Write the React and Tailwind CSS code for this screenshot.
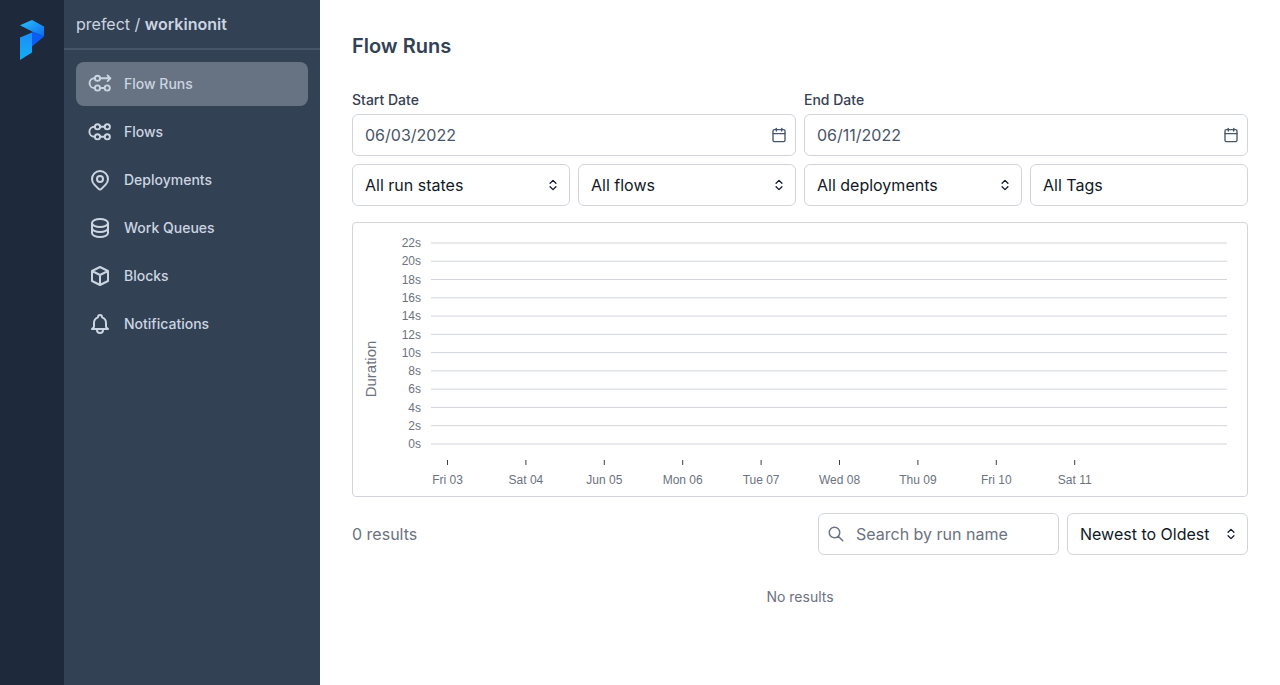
import { Calendar, ChevronsUpDown } from 'lucide-react'
import { HiOutlineBell, HiOutlineCube, HiOutlineDatabase, HiOutlineLocationMarker, HiOutlineSearch } from 'react-icons/hi'

const font = 'font-["Inter","Liberation_Sans",sans-serif]'

function FlowRunsIcon() {
  return (
    <svg className="w-6 h-6 shrink-0" viewBox="0 0 24 24" fill="none" stroke="currentColor" strokeWidth={1.9} strokeLinecap="round" strokeLinejoin="round">
      <circle cx="9.5" cy="6.3" r="2.6" />
      <circle cx="9.5" cy="16" r="2.6" />
      <circle cx="19.2" cy="16" r="2.6" />
      <path d="M12.1 6.3H22.4M19.6 3.5l2.8 2.8-2.8 2.800M12.100 16h4.500M6.900 6.300H6.400a4.850 4.850 0 0 0 0 9.700h.5" />
    </svg>
  )
}

function FlowsIcon() {
  return (
    <svg className="w-6 h-6 shrink-0" viewBox="0 0 24 24" fill="none" stroke="currentColor" strokeWidth={1.9} strokeLinecap="round" strokeLinejoin="round">
      <circle cx="9.5" cy="6.8" r="2.6" />
      <circle cx="19.3" cy="6.8" r="2.6" />
      <circle cx="9.5" cy="16.8" r="2.6" />
      <circle cx="19.3" cy="16.8" r="2.6" />
      <path d="M12.100 6.800h4.600M12.100 16.800h4.600M6.900 6.800H6.400a5 5 0 0 0 0 10h.5" />
    </svg>
  )
}

function Logo() {
  return (
    <svg className="w-[26px] h-[42px]" viewBox="0 0 26 42" fill="none">
      <defs>
        <linearGradient id="logoTop" x1="0" y1="0" x2="1" y2="1">
          <stop offset="0" stopColor="#2dc1f7" />
          <stop offset="1" stopColor="#0a6cf0" />
        </linearGradient>
        <linearGradient id="logoLeft" x1="0" y1="0" x2="0" y2="1">
          <stop offset="0" stopColor="#1c8cf8" />
          <stop offset="1" stopColor="#12b0f4" />
        </linearGradient>
      </defs>
      <path d="M1 6.200 13 1l12 6.600V17.500L13 12.500 1 6.200Z" fill="url(#logoTop)" />
      <path d="M13 12.500 25 17.500 13 27.500V12.500Z" fill="#0b5cf5" />
      <path d="M1 18.500 13 13.500V33.500L1 41V18.500Z" fill="url(#logoLeft)" />
    </svg>
  )
}

const navItems = [
  { name: 'Flow Runs', icon: <FlowRunsIcon />, active: true },
  { name: 'Flows', icon: <FlowsIcon /> },
  { name: 'Deployments', icon: <HiOutlineLocationMarker className="w-6 h-6 shrink-0" /> },
  { name: 'Work Queues', icon: <HiOutlineDatabase className="w-6 h-6 shrink-0" /> },
  { name: 'Blocks', icon: <HiOutlineCube className="w-6 h-6 shrink-0" /> },
  { name: 'Notifications', icon: <HiOutlineBell className="w-6 h-6 shrink-0" /> },
]

function Sidebar() {
  return (
    <div className="flex shrink-0 h-full">
      <div className="w-16 bg-[#1e293b] flex justify-center pt-[19px]">
        <Logo />
      </div>
      <div className="w-64 bg-[#334155]">
        <div className="h-[50px] border-b-2 border-[#475569] flex items-center px-3 text-base text-[#cbd5e1]">
          prefect /&nbsp;<span className="font-semibold">workinonit</span>
        </div>
        <nav className="px-3 pt-3 flex flex-col gap-1">
          {navItems.map(item => (
            <div
              key={item.name}
              className={`h-11 rounded-lg flex items-center gap-3 px-3 text-sm font-medium text-[#cbd5e1] ${item.active ? 'bg-[#677382]' : ''}`}
            >
              {item.icon}
              <span>{item.name}</span>
            </div>
          ))}
        </nav>
      </div>
    </div>
  )
}

function Field({ children, className = '' }) {
  return (
    <div className={`h-[42px] rounded-md border border-[#d1d5db] bg-white flex items-center justify-between px-3 text-base ${className}`}>
      {children}
    </div>
  )
}

function SelectField({ label }) {
  return (
    <Field className="text-[#111827]">
      <span>{label}</span>
      <ChevronsUpDown className="w-3.5 h-3.5 text-[#111827] -mr-[3px]" strokeWidth={2.2} />
    </Field>
  )
}

function DateField({ label, value, className = '' }) {
  return (
    <div className={className}>
      <div className="text-sm font-medium text-[#374151] h-[22px] flex items-center -mt-1 mb-[3px]">{label}</div>
      <Field className="text-[#475569]">
        <span>{value}</span>
        <Calendar className="w-4 h-4 text-[#475569] -mr-1" strokeWidth={2} />
      </Field>
    </div>
  )
}

const durations = ['22s', '20s', '18s', '16s', '14s', '12s', '10s', '8s', '6s', '4s', '2s', '0s']
const days = ['Fri 03', 'Sat 04', 'Jun 05', 'Mon 06', 'Tue 07', 'Wed 08', 'Thu 09', 'Fri 10', 'Sat 11']

function Chart() {
  return (
    <div className="mt-4 h-[275px] rounded border border-[#d1d5db] bg-white">
      <svg width="894" height="273" viewBox="0 0 894 273" className="block font-['Liberation_Sans',sans-serif]">
        {durations.map((d, i) => {
          const y = 20 + i * 18.27
          return (
            <g key={d}>
              <line x1="78" x2="874" y1={y} y2={y} stroke="#d1d5db" />
              <text x="68" y={y + 4.2} textAnchor="end" fontSize="12" fill="#6b7280">{d}</text>
            </g>
          )
        })}
        <text transform="translate(23 146) rotate(-90)" textAnchor="middle" fontSize="15" fill="#6b7280">Duration</text>
        {days.map((d, i) => {
          const x = 94.5 + i * 78.4
          return (
            <g key={d}>
              <line x1={x} x2={x} y1="237" y2="242" stroke="#374151" />
              <text x={x} y="261" textAnchor="middle" fontSize="12" fill="#6b7280">{d}</text>
            </g>
          )
        })}
      </svg>
    </div>
  )
}

export default function App() {
  return (
    <div className={`flex h-[685px] overflow-hidden bg-white ${font}`}>
      <Sidebar />
      <main className="flex-1 min-w-0 px-8 pt-8">
        <h1 className="text-xl font-semibold leading-7 text-[#334155]">Flow Runs</h1>

        <div className="grid grid-cols-4 gap-2 mt-[33px]">
          <DateField className="col-span-2" label="Start Date" value="06/03/2022" />
          <DateField className="col-span-2" label="End Date" value="06/11/2022" />
          <SelectField label="All run states" />
          <SelectField label="All flows" />
          <SelectField label="All deployments" />
          <Field className="text-[#111827]"><span>All Tags</span></Field>
        </div>

        <Chart />

        <div className="mt-4 flex items-center justify-between">
          <span className="text-base text-[#6b7280]">0 results</span>
          <div className="flex gap-2">
            <Field className="w-[241px] justify-start gap-[11px] pl-2 text-[#6b7280]">
              <HiOutlineSearch className="w-[18px] h-[18px] text-[#6b7280] shrink-0" />
              <span>Search by run name</span>
            </Field>
            <div className="w-[181px]">
              <SelectField label="Newest to Oldest" />
            </div>
          </div>
        </div>

        <p className="mt-8 text-center text-sm leading-5 text-[#6b7280]">No results</p>
      </main>
    </div>
  )
}
